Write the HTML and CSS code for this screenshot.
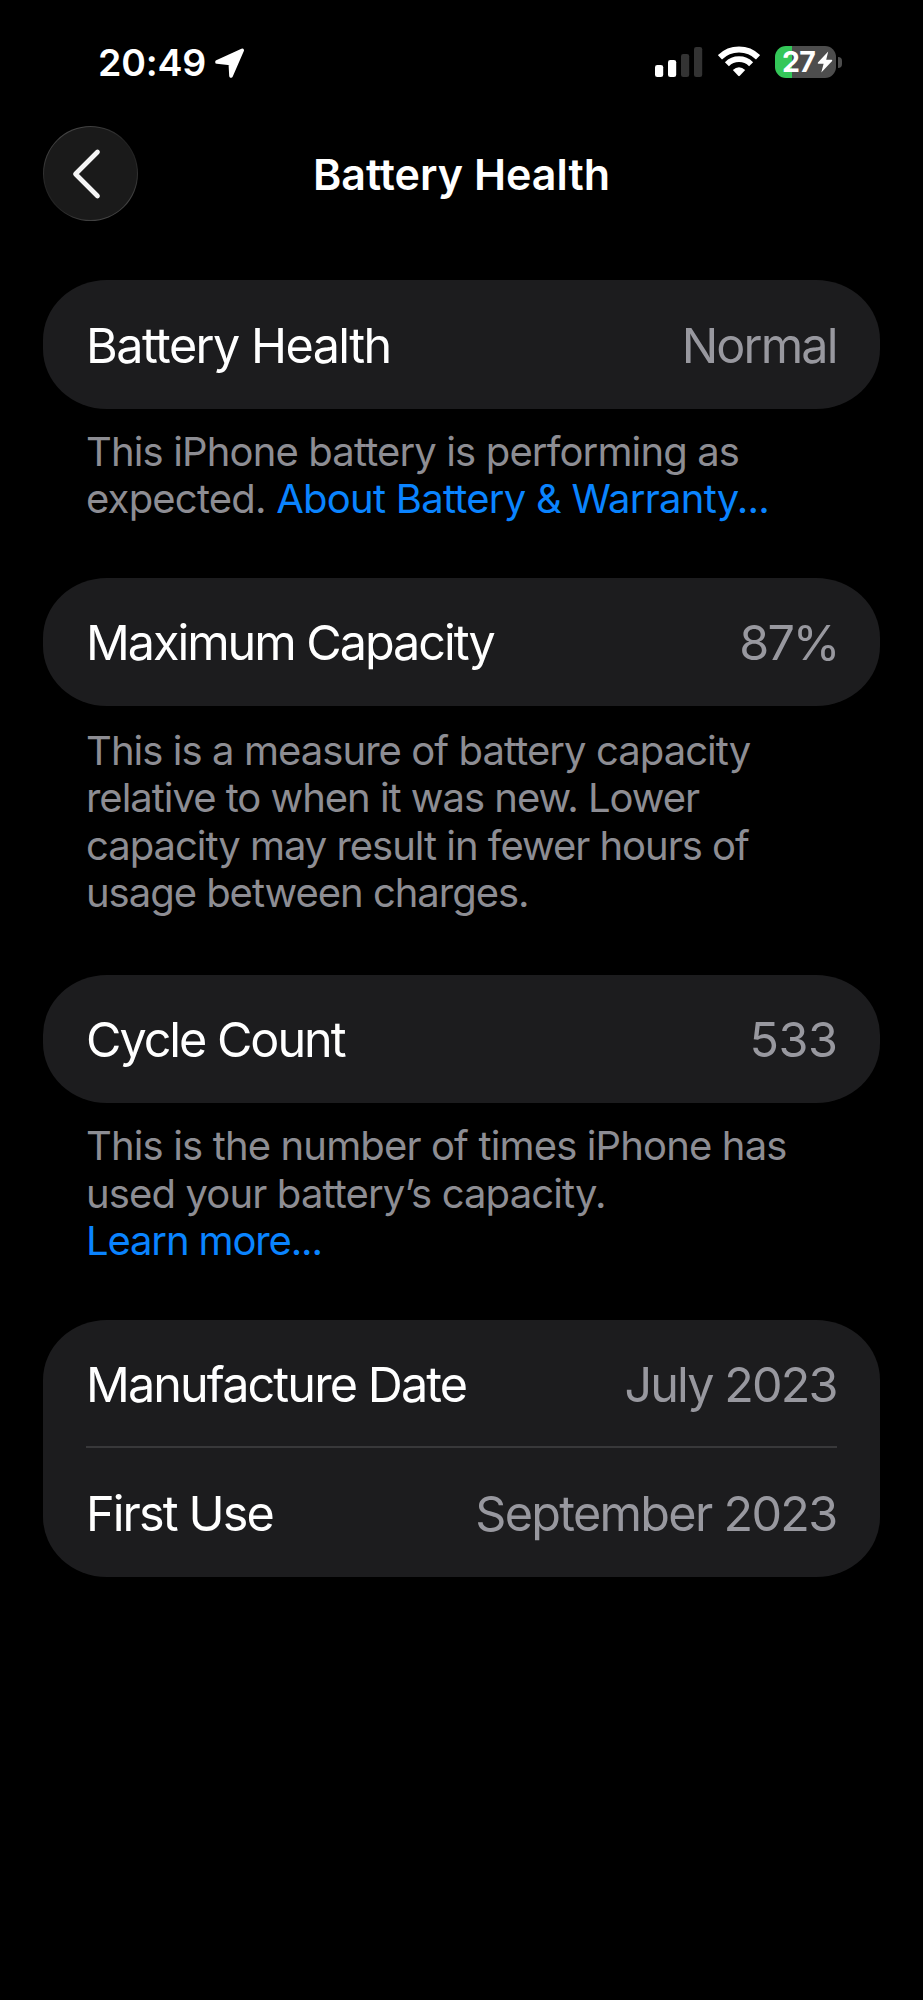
FILE: index.html
```html
<!DOCTYPE html>
<html lang="en">
<head>
<meta charset="utf-8">
<title>Battery Health</title>
<link rel="stylesheet" href="styles.css">
</head>
<body>
<div class="screen">
  <div class="status">
    <div class="status-left">
      <span class="time">20:49</span>
      <svg class="location" width="30" height="31" viewBox="0 0 30 31"><path d="M2 14 27.2 2.3 16 28 15.3 15.4Z" fill="#fff" stroke="#fff" stroke-width="3.6" stroke-linejoin="round"/></svg>
    </div>
    <div class="status-right">
      <svg class="signal" width="48" height="30" viewBox="0 0 48 30">
        <g fill="#fff"><rect x="0" y="18" width="8.2" height="12" rx="2.3"/><rect x="13" y="13" width="8.2" height="17" rx="2.3"/></g>
        <g fill="#333"><rect x="26" y="7" width="8.2" height="23" rx="2.3"/><rect x="39" y="0" width="8.2" height="30" rx="2.3"/></g>
      </svg>
      <svg class="wifi" width="42" height="31" viewBox="0 0 42 31">
        <g fill="none" stroke="#fff" stroke-width="6"><path d="M1.9 11.3A27.2 27.2 0 0 1 40.1 11.3"/><path d="M8.9 18.2A17.2 17.2 0 0 1 33.1 18.2" stroke-width="5.7"/></g>
        <path d="M14.8 24Q21 18.6 27.2 24L21.8 29.8Q21 30.6 20.2 29.8Z" fill="#fff"/>
      </svg>
      <div class="battery">
        <div class="battery-body">
          <span class="battery-level">27</span>
          <svg class="bolt" width="16" height="22" viewBox="0 0 16 22"><path d="M11.2.6.9 11.6Q.3 12.8 1.6 12.8H6.6L4.3 21.4 15.1 10Q15.7 8.8 14.4 8.8H9.2Z" fill="#fff"/></svg>
        </div>
        <div class="battery-cap"></div>
      </div>
    </div>
  </div>

  <header class="nav">
    <button class="back" aria-label="Back">
      <svg width="30" height="52" viewBox="0 0 30 52"><path d="M25.5 4 3.5 26 25.5 48" fill="none" stroke="#f5f5f5" stroke-width="4.7" stroke-linecap="round" stroke-linejoin="round"/></svg>
    </button>
    <h1 class="title">Battery Health</h1>
  </header>

  <main>
    <section class="card">
      <div class="row"><span class="label label-health">Battery Health</span><span class="value">Normal</span></div>
    </section>
    <p class="note"><span class="n-a">This iPhone battery is performing as</span><br><span class="n-b">expected. </span><a class="link n-f">About Battery &amp; Warranty...</a></p>

    <section class="card">
      <div class="row"><span class="label label-tight">Maximum Capacity</span><span class="value value-percent">87%</span></div>
    </section>
    <p class="note note-long"><span class="n-c">This is a measure of battery capacity</span><br><span class="n-d">relative to when it was new. Lower</span><br><span class="n-d">capacity may result in fewer hours of</span><br><span class="n-d">usage between charges.</span></p>

    <section class="card">
      <div class="row"><span class="label label-tight">Cycle Count</span><span class="value value-count">533</span></div>
    </section>
    <p class="note"><span class="n-a">This is the number of times iPhone has</span><br><span class="n-a">used your battery’s capacity.</span><br><a class="link n-e">Learn more...</a></p>

    <section class="card">
      <div class="row"><span class="label">Manufacture Date</span><span class="value">July 2023</span></div>
      <div class="row row-divided"><span class="label">First Use</span><span class="value value-month">September 2023</span></div>
    </section>
  </main>
</div>
</body>
</html>
```
FILE: styles.css
```css
* { box-sizing: border-box; }
body {
  margin: 0;
  background: #000;
  color: #fff;
  font-family: Inter, "Liberation Sans", sans-serif;
}
.screen { width: 923px; height: 2000px; overflow: hidden; }
svg { display: block; flex: none; }

/* Status bar */
.status {
  height: 126px;
  padding: 0 81px 0 98px;
  display: flex;
  justify-content: space-between;
  align-items: flex-start;
}
.status-left { display: flex; padding-top: 40px; }
.time { font-size: 37.5px; font-weight: 600; line-height: 46px; letter-spacing: -0.2px; width: 116.5px; }
.location { margin-top: 7.5px; }
.status-right { display: flex; padding-top: 46px; }
.signal { margin: 1px 14.5px 0 0; }
.wifi { margin-right: 15.5px; }
.battery { display: flex; align-items: center; gap: 2px; height: 32px; }
.battery-body {
  width: 61px;
  height: 32px;
  border-radius: 11px;
  background: linear-gradient(90deg, #34c759 16.5px, #4d4d4d 16.5px);
  display: flex;
  align-items: center;
  padding-left: 7px;
}
.battery-level { font-size: 28.5px; font-weight: 700; line-height: 32px; letter-spacing: -0.6px; width: 34.5px; }
.battery-cap { width: 4px; height: 11px; border-radius: 0 5px 5px 0; background: #4d4d4d; }

/* Navigation bar */
.nav {
  height: 154.3px;
  padding: 0 43px;
  display: grid;
  grid-template-columns: 95px 1fr 95px;
  align-items: start;
}
.back {
  width: 95px;
  height: 95px;
  padding: 0 0 0 27.5px;
  display: flex;
  align-items: center;
  border: 1.5px solid transparent;
  border-radius: 50%;
  background:
    linear-gradient(#1a1a1a, #1a1a1a) padding-box,
    linear-gradient(150deg, #444 15%, #242424 42%, #242424 58%, #444 85%) border-box;
}
.title {
  margin: 0;
  padding-top: 1px;
  font-size: 43px;
  font-weight: 600;
  line-height: 95px;
  text-align: center;
}

/* Grouped list */
.card {
  margin: 0 43px;
  border-radius: 64px / 60px;
  background: #1c1c1e;
}
.row {
  height: 128.5px;
  padding: 2px 43.5px 0 43px;
  display: flex;
  align-items: center;
  justify-content: space-between;
  position: relative;
  font-size: 48.5px;
  line-height: 60px;
  letter-spacing: -1.88px;
  white-space: nowrap;
}
.row-divided::before {
  content: "";
  position: absolute;
  top: -2.5px;
  left: 43px;
  right: 43px;
  height: 2px;
  background: #38383a;
}
.label-health { letter-spacing: -1.54px; }
.label-tight { letter-spacing: -2.03px; }
.value { color: #98989f; }
.value-percent { letter-spacing: -1.98px; margin-right: -2px; }
.value-count { letter-spacing: -0.45px; margin-right: -1px; }
.value-month { letter-spacing: -1.68px; }

/* Footnotes under the cards */
.note {
  margin: 0;
  padding: 18.9px 86px 55.9px;
  font-size: 40px;
  line-height: 47.2px;
  color: #8d8d93;
  white-space: nowrap;
}
.note-long { padding-top: 20.8px; padding-bottom: 58.9px; }
.link { color: #0a84ff; }
.n-a { letter-spacing: -0.86px; }
.n-b { letter-spacing: -0.8px; }
.n-c { letter-spacing: -0.94px; }
.n-d { letter-spacing: -1.03px; }
.n-e { letter-spacing: -1.14px; }
.n-f { letter-spacing: -0.75px; }
```
